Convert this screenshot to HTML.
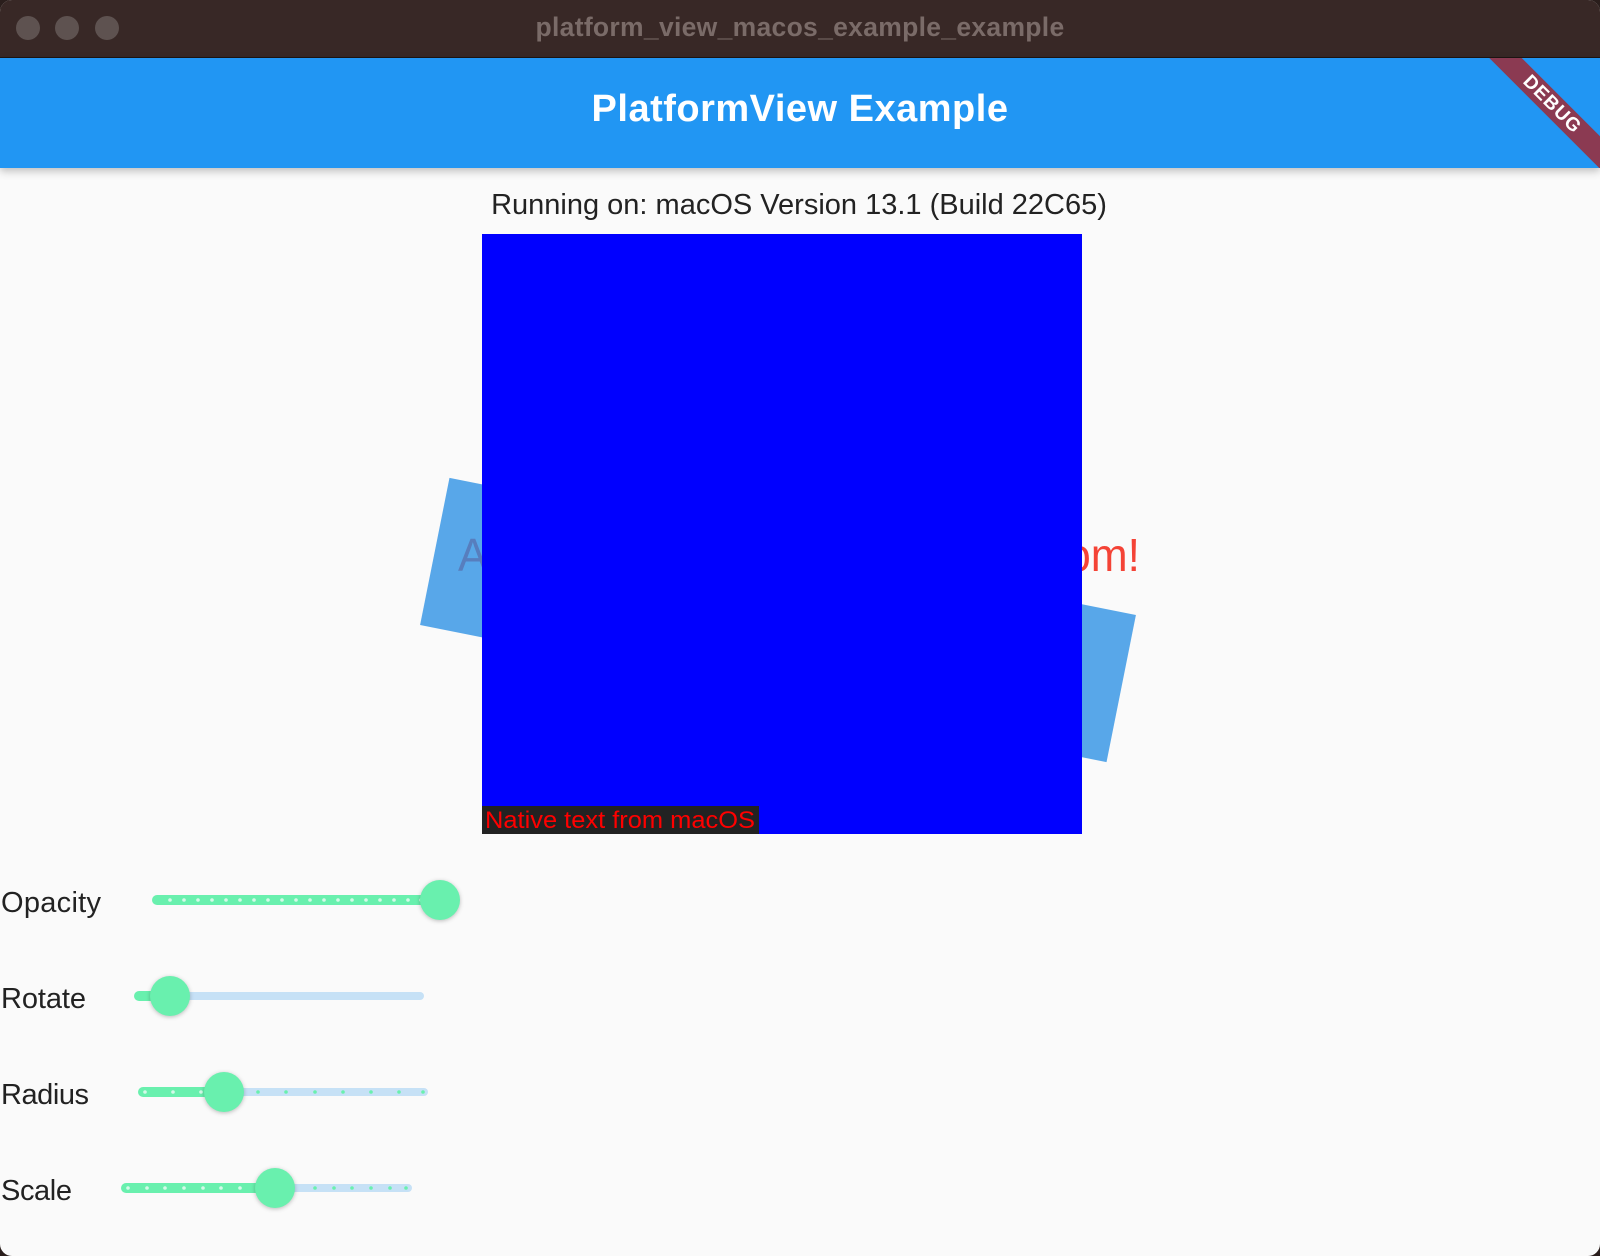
<!DOCTYPE html>
<html><head><meta charset="utf-8"><style>
html,body{margin:0;padding:0;width:1600px;height:1256px;overflow:hidden;background:#2a1e1c;font-family:"Liberation Sans",sans-serif}
#win{position:absolute;left:0;top:0;width:1600px;height:1256px;background:#fafafa;border-radius:12px;overflow:hidden}
#tb{position:absolute;left:0;top:0;width:1600px;height:57px;background:#382826;border-bottom:1px solid #1e1514}
.tl{position:absolute;top:16px;width:24px;height:24px;border-radius:50%;background:#5e5250}
#tt{position:absolute;left:0;width:1600px;top:12px;text-align:center;color:#7a6b68;font-weight:bold;font-size:26.5px;letter-spacing:0.3px}
#ab{position:absolute;left:0;top:58px;width:1600px;height:110px;background:#2196F3;box-shadow:0 3px 8px rgba(0,0,0,0.25);overflow:hidden}
#at{position:absolute;left:0;width:1600px;top:30px;text-align:center;color:#fff;font-size:38px;font-weight:bold;letter-spacing:0.5px}
#banner{position:absolute;left:1452px;top:35px;width:200px;height:23px;background:#8b3a52;transform:rotate(45deg);color:#fff;font-weight:bold;font-size:19px;text-align:center;line-height:23px;letter-spacing:1px}
.txt{position:absolute;color:#222;font-size:29px}
</style></head><body><div id="win">
<div id="tb"><div class="tl" style="left:16px"></div><div class="tl" style="left:55px"></div><div class="tl" style="left:95px"></div><div id="tt">platform_view_macos_example_example</div></div>
<div id="ab"><div id="at">PlatformView Example</div><div id="banner">DEBUG</div></div>
<div class="txt" style="width:1600px;top:189px;text-align:center;left:-1px">Running on: macOS Version 13.1 (Build 22C65)</div>
<svg style="position:absolute;left:0;top:0" width="1600" height="1256">
<text x="458" y="571" font-family="Liberation Sans" font-size="46" fill="#F44336" textLength="682" lengthAdjust="spacingAndGlyphs">Alpha text over platform view from!</text>
<rect x="428" y="545" width="700" height="150" fill="#2a8fe4" fill-opacity="0.78" transform="rotate(11.3 778 620)"/>
<rect x="482" y="234" width="600" height="600" fill="#0000ff"/>
<rect x="482" y="806" width="277" height="28" fill="#222"/>
<text x="485" y="828" font-family="Liberation Sans" font-size="24" fill="#ff0000" textLength="270" lengthAdjust="spacingAndGlyphs">Native text from macOS</text>
<g font-family="Liberation Sans" font-size="29" fill="#222">
<text x="1" y="912" textLength="100">Opacity</text><text x="1" y="1008" textLength="85">Rotate</text><text x="1" y="1104" textLength="88">Radius</text><text x="1" y="1200" textLength="71">Scale</text></g>
<line x1="157" y1="900" x2="440" y2="900" stroke="#69F0AE" stroke-width="10" stroke-linecap="round"/>
<line x1="139" y1="996" x2="420" y2="996" stroke="#c6e1f6" stroke-width="8" stroke-linecap="round"/>
<line x1="139" y1="996" x2="169" y2="996" stroke="#69F0AE" stroke-width="10" stroke-linecap="round"/>
<line x1="143" y1="1092" x2="424" y2="1092" stroke="#c6e1f6" stroke-width="8" stroke-linecap="round"/>
<line x1="143" y1="1092" x2="224" y2="1092" stroke="#69F0AE" stroke-width="10" stroke-linecap="round"/>
<line x1="126" y1="1188" x2="408" y2="1188" stroke="#c6e1f6" stroke-width="8" stroke-linecap="round"/>
<line x1="126" y1="1188" x2="274" y2="1188" stroke="#69F0AE" stroke-width="10" stroke-linecap="round"/>
<g fill="#d4fae8">
<circle cx="170" cy="900" r="1.8"/><circle cx="184" cy="900" r="1.8"/><circle cx="198" cy="900" r="1.8"/><circle cx="212" cy="900" r="1.8"/><circle cx="226" cy="900" r="1.8"/><circle cx="240" cy="900" r="1.8"/><circle cx="254" cy="900" r="1.8"/><circle cx="268" cy="900" r="1.8"/><circle cx="282" cy="900" r="1.8"/><circle cx="296" cy="900" r="1.8"/><circle cx="310" cy="900" r="1.8"/><circle cx="324" cy="900" r="1.8"/><circle cx="338" cy="900" r="1.8"/><circle cx="352" cy="900" r="1.8"/><circle cx="366" cy="900" r="1.8"/><circle cx="380" cy="900" r="1.8"/><circle cx="394" cy="900" r="1.8"/><circle cx="408" cy="900" r="1.8"/><circle cx="421" cy="900" r="1.8"/>
<circle cx="145" cy="1092" r="1.8"/><circle cx="173" cy="1092" r="1.8"/><circle cx="201" cy="1092" r="1.8"/>
<circle cx="128" cy="1188" r="1.8"/><circle cx="147" cy="1188" r="1.8"/><circle cx="165" cy="1188" r="1.8"/><circle cx="184" cy="1188" r="1.8"/><circle cx="203" cy="1188" r="1.8"/><circle cx="221" cy="1188" r="1.8"/><circle cx="240" cy="1188" r="1.8"/>
</g>
<g fill="#69F0AE">
<circle cx="258" cy="1092" r="1.8"/><circle cx="286" cy="1092" r="1.8"/><circle cx="315" cy="1092" r="1.8"/><circle cx="343" cy="1092" r="1.8"/><circle cx="371" cy="1092" r="1.8"/><circle cx="399" cy="1092" r="1.8"/><circle cx="423" cy="1092" r="1.8"/>
<circle cx="315" cy="1188" r="1.8"/><circle cx="334" cy="1188" r="1.8"/><circle cx="352" cy="1188" r="1.8"/><circle cx="371" cy="1188" r="1.8"/><circle cx="390" cy="1188" r="1.8"/><circle cx="406" cy="1188" r="1.8"/>
</g>
<g fill="#69F0AE" style="filter:drop-shadow(0 1px 2px rgba(0,0,0,0.25))">
<circle cx="440" cy="900" r="20"/><circle cx="170" cy="996" r="20"/><circle cx="224" cy="1092" r="20"/><circle cx="275" cy="1188" r="20"/>
</g>
</svg>
</div></body></html>
